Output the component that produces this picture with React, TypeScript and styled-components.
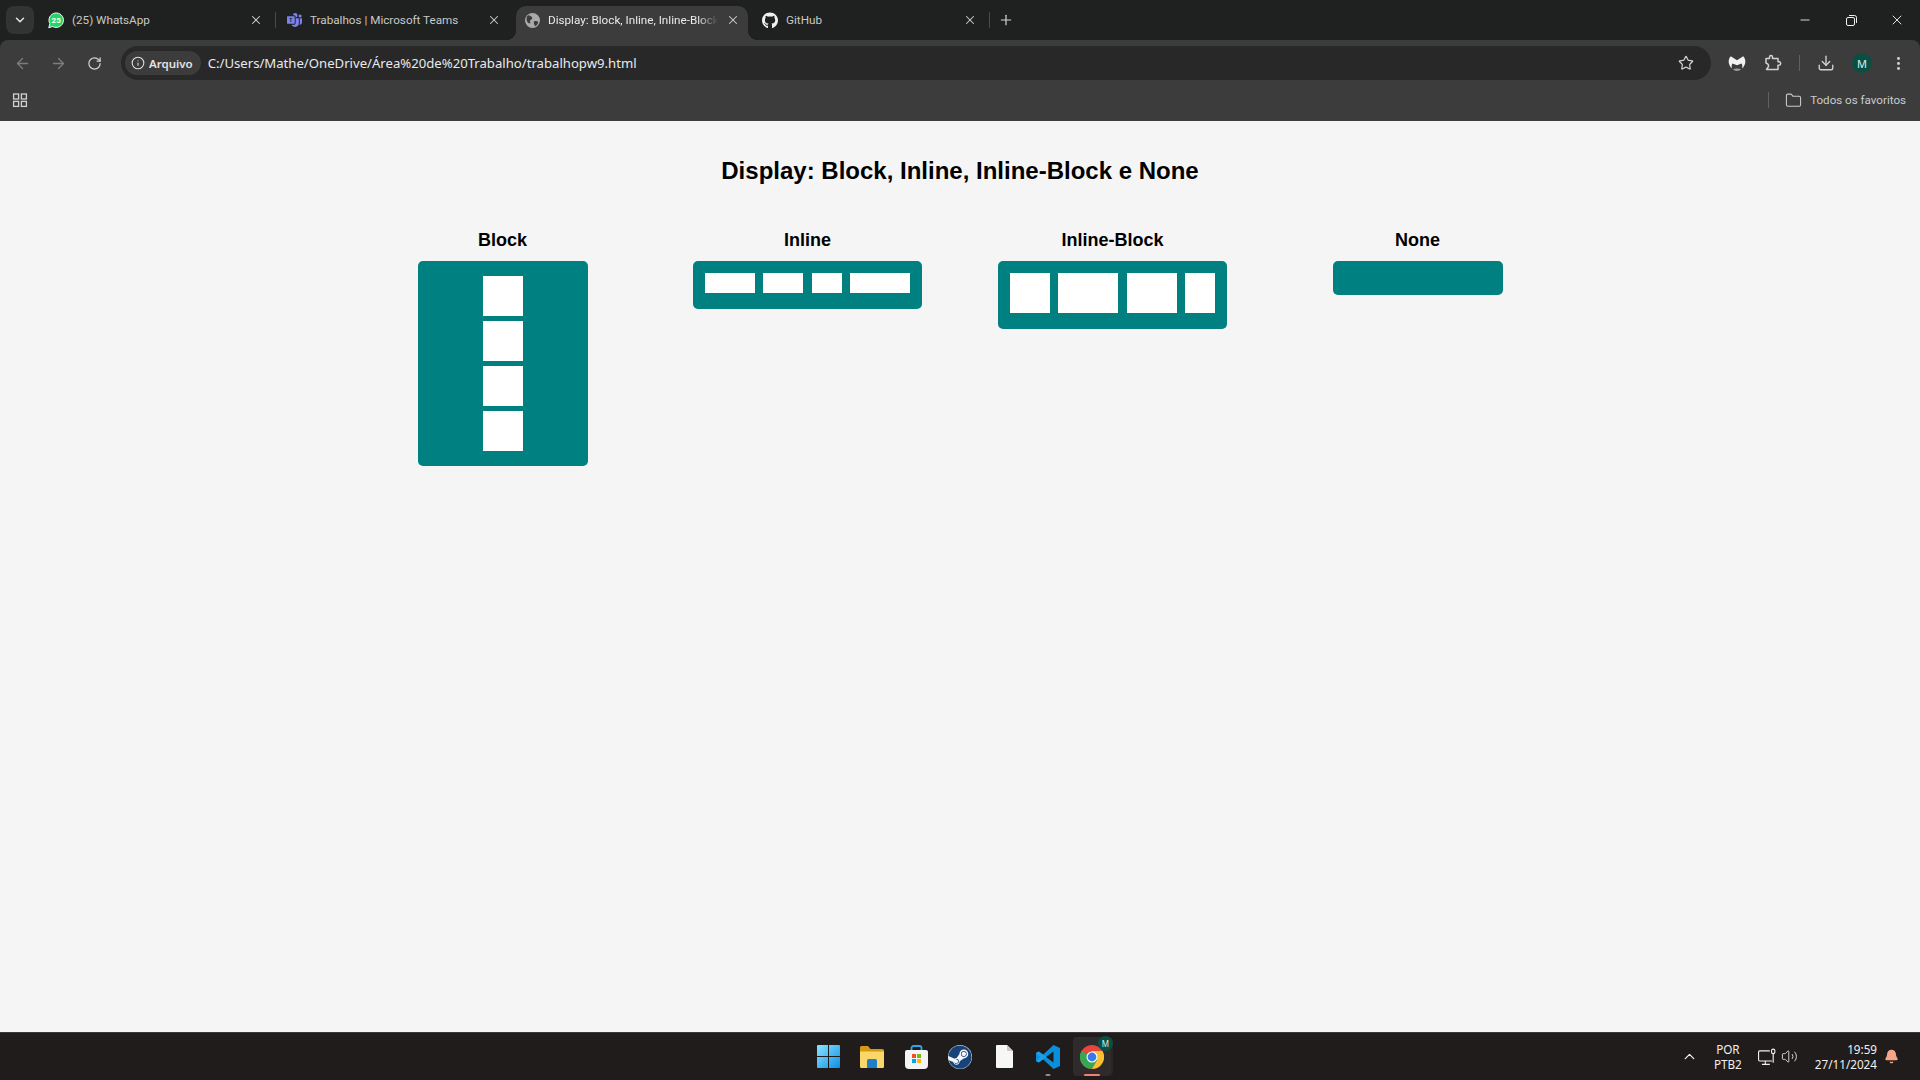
import React, { FC, ReactNode } from 'react';
import styled, { createGlobalStyle } from 'styled-components';
import {
  ArrowLeft, ArrowRight, RotateCw, Star, Download, EllipsisVertical, Folder, Plus, X,
  ChevronDown, ChevronUp, Info, Minus, Volume2, Bell,
} from 'lucide-react';
import { FaGithub, FaSteam } from 'react-icons/fa';
import { BsMicrosoftTeams } from 'react-icons/bs';

const GlobalStyle = createGlobalStyle`
  html, body { margin: 0; padding: 0; height: 100%; overflow: hidden; }
  * { box-sizing: border-box; }
`;

const Screen = styled.div`
  width: 1920px;
  height: 1080px;
  display: flex;
  flex-direction: column;
  font-family: 'Noto Sans', sans-serif;
  background: #1f2120;
`;

/* tab strip */
const TabStrip = styled.div`
  height: 40px;
  display: flex;
  align-items: flex-start;
  padding-left: 6px;
  color: #c7c9c8;
`;

const TabSearch = styled.div`
  width: 28px;
  height: 28px;
  margin-top: 6px;
  margin-right: 4px;
  border-radius: 8px;
  background: #323433;
  display: flex;
  align-items: center;
  justify-content: center;
  color: #e6e6e6;
`;

const Tab = styled.div<{ $active?: boolean; $divider?: boolean }>`
  position: relative;
  width: ${(p) => (p.$active ? 232 : 238)}px;
  height: 34px;
  margin: 6px ${(p) => (p.$active ? '4px 0 2px' : '0 0 0')};
  padding: 0 ${(p) => (p.$active ? '8px 6px 8px' : '13px 6px 10px')};
  display: flex;
  align-items: center;
  font-family: 'Roboto', sans-serif;
  font-size: 11.7px;
  color: ${(p) => (p.$active ? '#e8eaed' : '#c7c9c8')};
  background: ${(p) => (p.$active ? '#3c3c3c' : 'transparent')};
  border-radius: 10px 10px 0 0;
  &::after {
    content: '';
    display: ${(p) => (p.$divider ? 'block' : 'none')};
    position: absolute;
    right: 0;
    top: 6px;
    width: 1px;
    height: 16px;
    background: #4a4c4b;
  }
`;

const TabFlare = styled.span<{ $side: 'left' | 'right' }>`
  position: absolute;
  bottom: 0;
  width: 10px;
  height: 10px;
  ${(p) => (p.$side === 'left' ? 'left: -10px;' : 'right: -10px;')}
  background: radial-gradient(circle at ${(p) => (p.$side === 'left' ? '0 0' : '100% 0')}, transparent 10px, #3c3c3c 10.5px);
`;

const TabIcon = styled.span`
  width: 16px;
  height: 16px;
  flex: none;
  display: flex;
  align-items: center;
  justify-content: center;
`;

const TabTitle = styled.span<{ $fade?: boolean }>`
  flex: 1;
  margin-left: 8px;
  white-space: nowrap;
  overflow: hidden;
  ${(p) => p.$fade && 'mask-image: linear-gradient(to right, #000 150px, transparent 170px);'}
`;

const TabClose = styled.span`
  flex: none;
  display: flex;
  color: #d0d2d1;
`;

const NewTab = styled.div`
  margin-top: 8px;
  margin-left: 4px;
  width: 24px;
  height: 24px;
  display: flex;
  align-items: center;
  justify-content: center;
  color: #d6d6d6;
`;

const WindowControls = styled.div`
  margin-left: auto;
  display: flex;
  align-items: center;
  height: 40px;
  color: #f0f0f0;
`;

const WindowButton = styled.span`
  width: 46px;
  display: flex;
  justify-content: center;
`;

/* toolbar */
const Chrome = styled.div`
  background: #3c3c3c;
  border-radius: 8px 8px 0 0;
`;

const NavRow = styled.div`
  height: 46px;
  padding: 6px 4px;
  display: flex;
  align-items: center;
`;

const NavButton = styled.span<{ $dim?: boolean }>`
  width: 36px;
  height: 34px;
  flex: none;
  display: flex;
  align-items: center;
  justify-content: center;
  color: ${(p) => (p.$dim ? '#7c7e7d' : '#d0d2d1')};
`;

const AddressBar = styled.div`
  flex: 1;
  height: 34px;
  margin-left: 9px;
  margin-right: 8px;
  padding-left: 4px;
  padding-right: 17px;
  border-radius: 17px;
  background: #282828;
  display: flex;
  align-items: center;
`;

const Chip = styled.div`
  height: 24px;
  padding: 0 8px 0 6px;
  border-radius: 12px;
  background: #3c3c3c;
  display: flex;
  align-items: center;
  gap: 4px;
  font-size: 11.5px;
  font-weight: 600;
  color: #e3e3e3;
`;

const Url = styled.span`
  margin-left: 7px;
  font-size: 13.15px;
  color: #e8eaed;
  flex: 1;
`;

const ToolSeparator = styled.span`
  width: 1px;
  height: 16px;
  flex: none;
  margin: 0 8px;
  background: #5f6160;
`;

const Avatar = styled.span<{ $size: number }>`
  width: ${(p) => p.$size}px;
  height: ${(p) => p.$size}px;
  border-radius: 50%;
  background: #0b4f44;
  color: #d9efe9;
  font-size: ${(p) => Math.round(p.$size * 0.55)}px;
  display: flex;
  align-items: center;
  justify-content: center;
`;

const BookmarkRow = styled.div`
  height: 35px;
  padding: 0 14px 7px 12px;
  display: flex;
  align-items: center;
  color: #c8ccce;
  font-family: 'Roboto', sans-serif;
  font-size: 11.6px;
`;

const BookmarkFolder = styled.div`
  margin-left: auto;
  display: flex;
  align-items: center;
  gap: 8px;
`;

const BookmarkSeparator = styled.span`
  width: 1px;
  height: 16px;
  background: #5f6160;
  margin-right: 8px;
`;

/* page */
const Page = styled.main`
  flex: 1;
  background: #f5f5f5;
  color: #000;
  font-family: 'Liberation Sans', Arial, sans-serif;
  padding-top: 36px;
`;

const Title = styled.h1`
  margin: 0 0 45px;
  font-size: 24px;
  line-height: 28px;
  font-weight: 700;
  text-align: center;
`;

const Grid = styled.div`
  width: 1200px;
  margin: 0 auto;
  display: grid;
  grid-template-columns: repeat(4, 1fr);
  gap: 20px;
`;

const Column = styled.section`
  display: flex;
  flex-direction: column;
  align-items: center;
`;

const Label = styled.h2`
  margin: 0 0 11px;
  font-size: 18px;
  line-height: 20px;
  font-weight: 700;
`;

const Card = styled.div<{ $variant: 'block' | 'row' | 'empty' }>`
  background: #008080;
  border-radius: 5px;
  display: flex;
  ${(p) => p.$variant === 'block' && 'width: 170px; padding: 15px 0; flex-direction: column; align-items: center; gap: 5px;'}
  ${(p) => p.$variant === 'row' && 'padding: 12px 12px 16px; gap: 8.45px;'}
  ${(p) => p.$variant === 'empty' && 'width: 170px; height: 34px;'}
`;

const Item = styled.div<{ $w: number; $h: number }>`
  width: ${(p) => p.$w}px;
  height: ${(p) => p.$h}px;
  background: #fff;
`;

/* taskbar */
const Taskbar = styled.footer`
  height: 48px;
  background: #211c1c;
  border-top: 1px solid #3a3838;
  display: grid;
  grid-template-columns: 1fr auto 1fr;
  align-items: center;
  color: #f2f0f0;
`;

const TaskIcons = styled.div`
  display: flex;
  grid-column: 2;
  height: 100%;
`;

const TaskSlot = styled.div<{ $running?: boolean; $open?: boolean }>`
  position: relative;
  width: 44px;
  display: flex;
  align-items: center;
  justify-content: center;
  ${(p) => p.$running && `
    &::before {
      content: '';
      position: absolute;
      left: 3px; right: 3px; top: 4px; bottom: 4px;
      background: #2f2b2b;
      border-radius: 4px;
      box-shadow: 3px 0 0 -1px #2a2626;
    }
  `}
  ${(p) => p.$open && `
    &::after {
      content: '';
      position: absolute;
      left: 50%;
      bottom: 4px;
      transform: translateX(-50%);
      width: ${p.$running ? 16 : 5}px;
      height: 2.5px;
      border-radius: 2px;
      background: ${p.$running ? '#f28070' : '#8f8c8c'};
    }
  `}
  & > svg { position: relative; }
`;

const SteamDisc = styled.span`
  display: flex;
  border-radius: 50%;
  background: #f4f6f8;
`;

const Badge = styled.span`
  position: absolute;
  right: 1px;
  top: 3px;
`;

const Tray = styled.div`
  grid-column: 3;
  display: flex;
  justify-content: flex-end;
  align-items: center;
  font-size: 11.7px;
  padding-right: 21px;
`;

const TrayIcon = styled.span<{ $mr: number }>`
  display: flex;
  margin-right: ${(p) => p.$mr}px;
`;

const TrayText = styled.div<{ $align: 'center' | 'right'; $mr: number }>`
  text-align: ${(p) => p.$align};
  line-height: 15px;
  margin-right: ${(p) => p.$mr}px;
`;

const Malware: FC = () => (
  <svg width="18" height="18" viewBox="0 0 18 18" fill="#f1f1f1">
    <path d="M2.800 2.200 9 6.200l6.200-4c1.600 1.600 2.300 3.700 2.100 6-.2 2.300-1.400 4.600-3.200 6.300.5-2 .3-3.600-.6-5L9 11.200 4.500 9.500c-.9 1.400-1.100 3-.6 5C2.100 12.800.9 10.500.7 8.200c-.2-2.300.5-4.400 2.100-6Z" />
    <path d="M5 15.200c2.600-.9 5.400-.9 8 0-1 1-2.400 1.700-4 1.800-1.600-.1-3-.8-4-1.800Z" opacity=".55" />
  </svg>
);

const Extension: FC = () => (
  <svg width="18" height="18" viewBox="0 0 18 18" fill="none" stroke="#d0d2d1" strokeWidth="1.5" strokeLinejoin="round">
    <path d="M2 4.500h3.500V3a1.500 1.500 0 0 1 3 0v1.500h5.500v3.300h1a1.700 1.700 0 0 1 0 3.400h-1v4.300H2.500l1.700-2.500c.7-1.100.3-2.300-.6-3.100L2 9V4.500Z" />
  </svg>
);

const Restore: FC = () => (
  <svg width="11" height="11" viewBox="0 0 11 11" fill="none" stroke="currentColor" strokeWidth="1">
    <rect x=".5" y="2.500" width="8" height="8" rx="1.500" />
    <path d="M3 .5h5.500A2 2 0 0 1 10.500 2.500V8" />
  </svg>
);

const AppsGrid: FC = () => (
  <svg width="16" height="16" viewBox="0 0 16 16" fill="none" stroke="#d0d2d1" strokeWidth="1.300">
    <rect x="1.600" y="2" width="5" height="5" />
    <rect x="9.400" y="2" width="5" height="5" />
    <rect x="1.600" y="9.400" width="5" height="5" />
    <rect x="9.400" y="9.400" width="5" height="5" />
  </svg>
);

const GlobeFavicon: FC = () => (
  <svg width="15" height="15" viewBox="0 0 16 16">
    <circle cx="8" cy="8" r="8" fill="#a9abaa" />
    <path d="M3.500 2.500C5 3 6.500 3.500 7.500 4.500 8.500 5.500 7 7 6 7.500 5 8 5 9.500 6 10.500 5 11.500 4 11 3 10 2 9 1.500 7 1.700 5.500 2 4 2.800 3 3.500 2.500ZM9.500 9C11 8 13 8.500 14.200 9.500 13.800 11.500 12.500 13 11 14 10 13 9 11 9.500 9Z" fill="#3c3c3c" />
  </svg>
);

const WhatsappFavicon: FC = () => (
  <svg width="17" height="17" viewBox="0 0 17 17">
    <path d="M.8 16.200l1.200-4.300a7.700 7.700 0 1 1 3 3L.8 16.200Z" fill="#25d366" stroke="#fff" strokeWidth="1" />
    <text x="8.700" y="11" fontSize="8.500" fontWeight="700" textAnchor="middle" fill="#fff" fontFamily="Roboto">25</text>
  </svg>
);

const WindowsLogo: FC = () => (
  <svg width="23" height="23" viewBox="0 0 23 23">
    <defs>
      <linearGradient id="win" x1="0" y1="0" x2="1" y2="1">
        <stop offset="0" stopColor="#8ae4ff" />
        <stop offset="1" stopColor="#0f8fe6" />
      </linearGradient>
    </defs>
    <path d="M0 1a1 1 0 0 1 1-1h10v11H0ZM12 0h10a1 1 0 0 1 1 1v10H12ZM0 12h11v11H1a1 1 0 0 1-1-1ZM12 12h11v10a1 1 0 0 1-1 1H12Z" fill="url(#win)" />
  </svg>
);

const ExplorerIcon: FC = () => (
  <svg width="24" height="22" viewBox="0 0 24 22">
    <path d="M0 1.500A1.500 1.500 0 0 1 1.500 0h6.500l2.500 3H22.500A1.500 1.500 0 0 1 24 4.500V8H0Z" fill="#d49a12" />
    <path d="M0 5.500h24v15A1.500 1.500 0 0 1 22.500 22h-21A1.500 1.500 0 0 1 0 20.500Z" fill="#fbd66a" />
    <path d="M7 14.500a1.500 1.500 0 0 1 1.500-1.500h7a1.500 1.500 0 0 1 1.500 1.500V22H7Z" fill="#1f80c9" />
  </svg>
);

const StoreIcon: FC = () => (
  <svg width="23" height="24" viewBox="0 0 23 24">
    <path d="M6.500 6V3a2 2 0 0 1 2-2h6a2 2 0 0 1 2 2v3" fill="none" stroke="#2ba8e8" strokeWidth="1.800" />
    <path d="M0 7a2 2 0 0 1 2-2h19a2 2 0 0 1 2 2v13a4 4 0 0 1-4 4H4a4 4 0 0 1-4-4Z" fill="#f4f4f4" />
    <rect x="7" y="9" width="4" height="4" fill="#f25022" />
    <rect x="12" y="9" width="4" height="4" fill="#7fba00" />
    <rect x="7" y="14" width="4" height="4" fill="#00a4ef" />
    <rect x="12" y="14" width="4" height="4" fill="#ffb900" />
  </svg>
);

const FileIcon: FC = () => (
  <svg width="17" height="23" viewBox="0 0 17 23">
    <path d="M1 0h10l6 6v16a1 1 0 0 1-1 1H1a1 1 0 0 1-1-1V1a1 1 0 0 1 1-1Z" fill="#f7f7f7" />
    <path d="M11 0l6 6h-5a1 1 0 0 1-1-1Z" fill="#c9c9c9" />
  </svg>
);

const VsCodeIcon: FC = () => (
  <svg width="24" height="24" viewBox="0 0 24 24">
    <path d="M17.500 0 24 3v18l-6.500 3L7 14.200l-4.300 3.300L0 16V8l2.700-1.500L7 9.800Z" fill="#0a8fdc" />
    <path d="M17.500 6.500 10 12l7.500 5.500Z" fill="#211c1c" />
    <path d="M0 8l2.700-1.500 8 5.500-8 5.500L0 16l4-4Z" fill="#1a9fe8" />
  </svg>
);

const ChromeIcon: FC = () => (
  <svg width="24" height="24" viewBox="0 0 24 24">
    <circle cx="12" cy="12" r="12" fill="#e8453c" />
    <path d="M12 12 1.600 6A12 12 0 0 0 12 24l5.200-9Z" fill="#34a853" />
    <path d="M12 6h10.400A12 12 0 0 1 12 24l5.200-9Z" fill="#fbc02d" />
    <circle cx="12" cy="12" r="5.500" fill="#fff" />
    <circle cx="12" cy="12" r="4.400" fill="#3b78e7" />
  </svg>
);

const NetworkIcon: FC = () => (
  <svg width="18" height="18" viewBox="0 0 16 16" fill="none" stroke="currentColor" strokeWidth="1">
    <path d="M10.500 2.500H1.500a1 1 0 0 0-1 1v7a1 1 0 0 0 1 1h11" />
    <path d="M6.500 11.500v3M3.500 14.500h7" />
    <rect x="12" y="1" width="3" height="4" rx="1.500" />
    <path d="M13.500 5v8" />
  </svg>
);

const items = {
  block: [40, 40, 40, 40],
  inline: [50, 40, 30, 60],
  inlineBlock: [40, 60, 50, 30],
};

const tabs: { icon: ReactNode; title: string; active?: boolean; divider?: boolean }[] = [
  { icon: <WhatsappFavicon />, title: '(25) WhatsApp', divider: true },
  { icon: <BsMicrosoftTeams size={15} color="#7b83eb" />, title: 'Trabalhos | Microsoft Teams' },
  { icon: <GlobeFavicon />, title: 'Display: Block, Inline, Inline-Block e None', active: true },
  { icon: <FaGithub size={17} color="#f0f0f0" />, title: 'GitHub', divider: true },
];

export default function App() {
  return (
    <Screen>
      <GlobalStyle />
      <TabStrip>
        <TabSearch><ChevronDown size={14} strokeWidth={2.5} /></TabSearch>
        {tabs.map((t) => (
          <Tab key={t.title} $active={t.active} $divider={t.divider}>
            {t.active && <TabFlare $side="left" />}
            {t.active && <TabFlare $side="right" />}
            <TabIcon>{t.icon}</TabIcon>
            <TabTitle $fade={t.active}>{t.title}</TabTitle>
            <TabClose><X size={14} strokeWidth={1.8} /></TabClose>
          </Tab>
        ))}
        <NewTab><Plus size={16} strokeWidth={1.8} /></NewTab>
        <WindowControls>
          <WindowButton><Minus size={14} strokeWidth={1.5} /></WindowButton>
          <WindowButton><Restore /></WindowButton>
          <WindowButton><X size={16} strokeWidth={1.4} /></WindowButton>
        </WindowControls>
      </TabStrip>

      <Chrome>
        <NavRow>
          <NavButton $dim><ArrowLeft size={17} strokeWidth={1.8} /></NavButton>
          <NavButton $dim><ArrowRight size={17} strokeWidth={1.8} /></NavButton>
          <NavButton><RotateCw size={15} strokeWidth={2} /></NavButton>
          <AddressBar>
            <Chip><Info size={14} strokeWidth={1.8} />Arquivo</Chip>
            <Url>C:/Users/Mathe/OneDrive/Área%20de%20Trabalho/trabalhopw9.html</Url>
            <Star size={16} strokeWidth={1.8} color="#d0d2d1" />
          </AddressBar>
          <NavButton><Malware /></NavButton>
          <NavButton><Extension /></NavButton>
          <ToolSeparator />
          <NavButton><Download size={18} strokeWidth={1.8} /></NavButton>
          <NavButton><Avatar $size={20}>M</Avatar></NavButton>
          <NavButton><EllipsisVertical size={17} strokeWidth={2.2} /></NavButton>
        </NavRow>
        <BookmarkRow>
          <AppsGrid />
          <BookmarkFolder>
            <BookmarkSeparator />
            <Folder size={17} strokeWidth={1.5} />
            Todos os favoritos
          </BookmarkFolder>
        </BookmarkRow>
      </Chrome>

      <Page>
        <Title>Display: Block, Inline, Inline-Block e None</Title>
        <Grid>
          <Column>
            <Label>Block</Label>
            <Card $variant="block">
              {items.block.map((w, i) => <Item key={i} $w={w} $h={40} />)}
            </Card>
          </Column>
          <Column>
            <Label>Inline</Label>
            <Card $variant="row">
              {items.inline.map((w, i) => <Item key={i} $w={w} $h={20} />)}
            </Card>
          </Column>
          <Column>
            <Label>Inline-Block</Label>
            <Card $variant="row">
              {items.inlineBlock.map((w, i) => <Item key={i} $w={w} $h={40} />)}
            </Card>
          </Column>
          <Column>
            <Label>None</Label>
            <Card $variant="empty" />
          </Column>
        </Grid>
      </Page>

      <Taskbar>
        <TaskIcons>
          <TaskSlot><WindowsLogo /></TaskSlot>
          <TaskSlot><ExplorerIcon /></TaskSlot>
          <TaskSlot><StoreIcon /></TaskSlot>
          <TaskSlot><SteamDisc><FaSteam size={24} color="#15437a" /></SteamDisc></TaskSlot>
          <TaskSlot><FileIcon /></TaskSlot>
          <TaskSlot $open><VsCodeIcon /></TaskSlot>
          <TaskSlot $open $running>
            <ChromeIcon />
            <Badge><Avatar $size={15}>M</Avatar></Badge>
          </TaskSlot>
        </TaskIcons>
        <Tray>
          <TrayIcon $mr={16}><ChevronUp size={17} strokeWidth={1.8} /></TrayIcon>
          <TrayText $align="center" $mr={16}>POR<br />PTB2</TrayText>
          <TrayIcon $mr={5}><NetworkIcon /></TrayIcon>
          <TrayIcon $mr={17}><Volume2 size={17} strokeWidth={1.2} /></TrayIcon>
          <TrayText $align="right" $mr={7}>19:59<br />27/11/2024</TrayText>
          <TrayIcon $mr={0}><Bell size={15} color="#f4a58a" fill="#f4a58a" /></TrayIcon>
        </Tray>
      </Taskbar>
    </Screen>
  );
}
